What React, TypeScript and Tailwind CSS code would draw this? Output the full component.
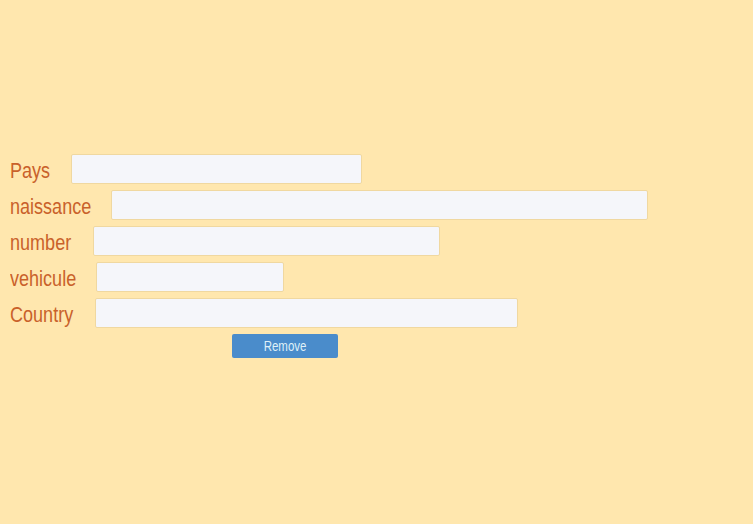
import React from 'react';

// label box widths include the 20px gap before each input
const fields = [
  { label: 'Pays', labelW: 'w-[61px]', width: 'w-[291px]' },
  { label: 'naissance', labelW: 'w-[101px]', width: 'w-[537px]' },
  { label: 'number', labelW: 'w-[83px]', width: 'w-[347px]' },
  { label: 'vehicule', labelW: 'w-[86px]', width: 'w-[188px]' },
  { label: 'Country', labelW: 'w-[85px]', width: 'w-[423px]' },
];

export default function App() {
  return (
    <div className="min-h-[524px] w-full bg-[#ffe7ae] pl-[10px] pt-[154px] font-['Liberation_Sans',Arial,sans-serif]">
      <div className="flex flex-col gap-[6px]">
        {fields.map((f) => (
          <div key={f.label} className="flex h-[30px] flex-row items-center">
            <label className={`${f.labelW} shrink-0 whitespace-nowrap pt-[3px] text-[22px] leading-none text-[#c9612a]`}>
              <span className="inline-block origin-left scale-x-[0.82]">{f.label}</span>
            </label>
            <input
              type="text"
              className={`h-[30px] ${f.width} rounded-[2px] border border-[#f0d8a0] bg-[#f5f6fa] outline-none`}
            />
          </div>
        ))}
        <div className="flex flex-row">
          <button
            type="button"
            className="ml-[222px] h-[24px] w-[106px] rounded-[2px] bg-[#4a8ccb] pt-[1px] text-[14px] text-[#dff0f8]"
          >
            <span className="inline-block scale-x-[0.82]">Remove</span>
          </button>
        </div>
      </div>
    </div>
  );
}
